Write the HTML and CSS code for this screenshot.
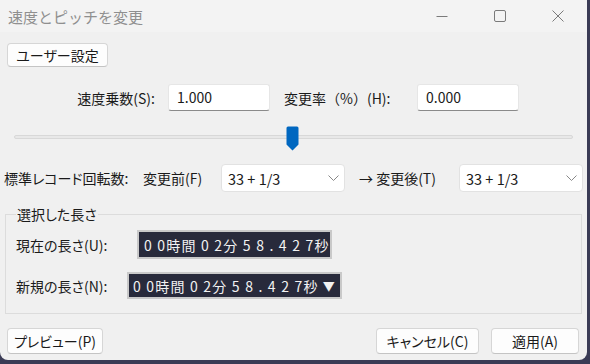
FILE: index.html
```html
<!DOCTYPE html>
<html lang="ja">
<head>
  <meta charset="UTF-8">
  <title>速度とピッチを変更</title>
  <link rel="stylesheet" href="styles.css">
</head>
<body>
  <div class="window">
    <div class="titlebar">
      <span class="title">速度とピッチを変更</span>
      <div class="caps">
        <span class="cap">
          <svg width="12" height="12" viewBox="0 0 12 12"><path d="M0.5 6.5h11" stroke="#7a7a7a" stroke-width="1"/></svg>
        </span>
        <span class="cap">
          <svg width="12" height="12" viewBox="0 0 12 12"><rect x="0.5" y="0.5" width="11" height="11" rx="1.5" fill="none" stroke="#7a7a7a" stroke-width="1"/></svg>
        </span>
        <span class="cap">
          <svg width="12" height="12" viewBox="0 0 12 12"><path d="M0.5 0.5L11.5 11.5M11.5 0.5L0.5 11.5" stroke="#7a7a7a" stroke-width="1"/></svg>
        </span>
      </div>
    </div>

    <div class="content">
      <div class="top-row">
        <button class="btn btn-user">ユーザー設定</button>
      </div>

      <div class="rate-row">
        <span class="lbl lbl-speed">速度乗数(S):</span>
        <div class="field">1.000</div>
        <span class="lbl lbl-pct">変更率（%）(H):</span>
        <div class="field">0.000</div>
      </div>

      <div class="slider">
        <div class="track"></div>
        <svg class="thumb" width="13" height="25" viewBox="0 0 13 25">
          <path d="M2 0.5h9a1.5 1.5 0 0 1 1.5 1.5v16.5l-6 6l-6-6v-16.5a1.5 1.5 0 0 1 1.5-1.5z" fill="#0067c0"/>
        </svg>
      </div>

      <div class="rpm-row">
        <span class="lbl lbl-rpm">標準レコード回転数:</span>
        <span class="lbl lbl-from">変更前(F)</span>
        <div class="select">
          <span>33 + 1/3</span>
          <svg width="11" height="6" viewBox="0 0 11 6"><path d="M0.5 0.5l5 5l5-5" fill="none" stroke="#888" stroke-width="1"/></svg>
        </div>
        <span class="lbl lbl-to">→ 変更後(T)</span>
        <div class="select">
          <span>33 + 1/3</span>
          <svg width="11" height="6" viewBox="0 0 11 6"><path d="M0.5 0.5l5 5l5-5" fill="none" stroke="#888" stroke-width="1"/></svg>
        </div>
      </div>

      <fieldset class="group">
        <legend>選択した長さ</legend>
        <div class="len-row">
          <span class="lbl lbl-len">現在の長さ(U):</span>
          <div class="time time-cur">0 0時間 0 2分 5 8 . 4 2 7秒</div>
        </div>
        <div class="len-row len-row-new">
          <span class="lbl lbl-len">新規の長さ(N):</span>
          <div class="time time-new">0 0時間 0 2分 5 8 . 4 2 7秒<span class="tri">▼</span></div>
        </div>
      </fieldset>

      <div class="bottom-row">
        <button class="btn btn-preview">プレビュー(P)</button>
        <div class="spacer"></div>
        <button class="btn btn-cancel">キャンセル(C)</button>
        <button class="btn btn-apply">適用(A)</button>
      </div>
    </div>
  </div>
</body>
</html>
```

FILE: styles.css
```css
body {
  margin: 0;
  width: 590px;
  height: 364px;
  background: #3a3b55;
  overflow: hidden;
  font-family: "Noto Sans CJK JP", "Noto Sans", sans-serif;
  font-size: 14px;
  font-feature-settings: "palt";
  color: #1a1a1a;
}

.window {
  width: 587px;
  height: 360px;
  background: #f0f0f0;
  border-radius: 0 0 8px 8px;
  display: flex;
  flex-direction: column;
}

.titlebar {
  height: 32px;
  display: flex;
  align-items: center;
  background: #f3f3f3;
}

.title {
  margin-left: 8px;
  color: #8f8f8f;
  font-size: 15px;
  font-feature-settings: normal;
  flex: 1;
}

.caps {
  display: flex;
}

.cap {
  width: 58px;
  height: 32px;
  display: flex;
  align-items: center;
  justify-content: center;
}

.content {
  flex: 1;
  display: flex;
  flex-direction: column;
}

.lbl {
  white-space: nowrap;
  line-height: 20px;
}

.btn {
  font-family: inherit;
  font-size: 14px;
  font-feature-settings: "palt";
  white-space: nowrap;
  color: #1a1a1a;
  background: #fdfdfd;
  border: 1px solid #d6d6d6;
  border-bottom-color: #c4c4c4;
  border-radius: 4px;
  padding: 0;
  height: 26px;
  line-height: 22px;
}

.top-row {
  margin-top: 11px;
  padding-left: 7px;
}

.btn-user {
  width: 101px;
  height: 24px;
}

.rate-row {
  margin-top: 17px;
  display: flex;
  align-items: center;
}

.lbl-speed {
  width: 155px;
  text-align: right;
}

.lbl-pct {
  width: 120px;
  margin-left: 14px;
  font-feature-settings: normal;
}

.field {
  width: 102px;
  height: 27px;
  box-sizing: border-box;
  margin-left: 13px;
  background: #fff;
  border: 1px solid #e6e6e6;
  border-bottom-color: #8a8a8a;
  border-radius: 3px;
  padding-left: 8px;
  line-height: 24px;
}

.slider {
  position: relative;
  margin-top: 15px;
  height: 26px;
}

.track {
  position: absolute;
  left: 14px;
  width: 559px;
  top: 9px;
  height: 4px;
  box-sizing: border-box;
  background: #e8e8e8;
  border: 1px solid #d8d8d8;
  border-radius: 2px;
}

.thumb {
  position: absolute;
  left: 286px;
  top: 0;
}

.rpm-row {
  margin-top: 12px;
  display: flex;
  align-items: center;
  padding-left: 4px;
}

.lbl-rpm {
  width: 139px;
}

.lbl-from {
  width: 78px;
}

.lbl-to {
  width: 100px;
  margin-left: 14px;
}

.select {
  width: 124px;
  height: 28px;
  box-sizing: border-box;
  background: #fff;
  border: 1px solid #e2e2e2;
  border-radius: 4px;
  display: flex;
  align-items: center;
  justify-content: space-between;
  padding: 0 5px 0 6px;
  font-size: 14.5px;
}

.group {
  margin: 14px 0 0 5px;
  width: 577px;
  height: 108px;
  box-sizing: border-box;
  border: 1px solid #dcdcdc;
  padding: 0 0 0 10px;
}

.group legend {
  padding: 0 1px;
  margin-left: 0;
  line-height: 16px;
}

.len-row {
  display: flex;
  align-items: center;
  margin-top: 8px;
}

.len-row-new {
  margin-top: 13px;
}

.lbl-len {
  width: 121px;
}

.time {
  box-sizing: border-box;
  background: #282a3b;
  color: #f2f2f2;
  border: 2px solid #c9c9c9;
  letter-spacing: 1.2px;
  font-feature-settings: normal;
  white-space: nowrap;
  display: flex;
  align-items: center;
}

.time-cur {
  width: 195px;
  height: 29px;
  padding-left: 5px;
}

.time-new {
  width: 215px;
  height: 27px;
  margin-left: -10px;
  padding-left: 4px;
}

.tri {
  margin-left: 4px;
  font-size: 12px;
  letter-spacing: 0;
}

.bottom-row {
  margin-top: 14px;
  display: flex;
  padding: 0 8px 0 7px;
}

.spacer {
  flex: 1;
}

.btn-preview {
  width: 96px;
}

.btn-cancel {
  width: 103px;
}

.btn-apply {
  width: 88px;
  margin-left: 12px;
}
```
